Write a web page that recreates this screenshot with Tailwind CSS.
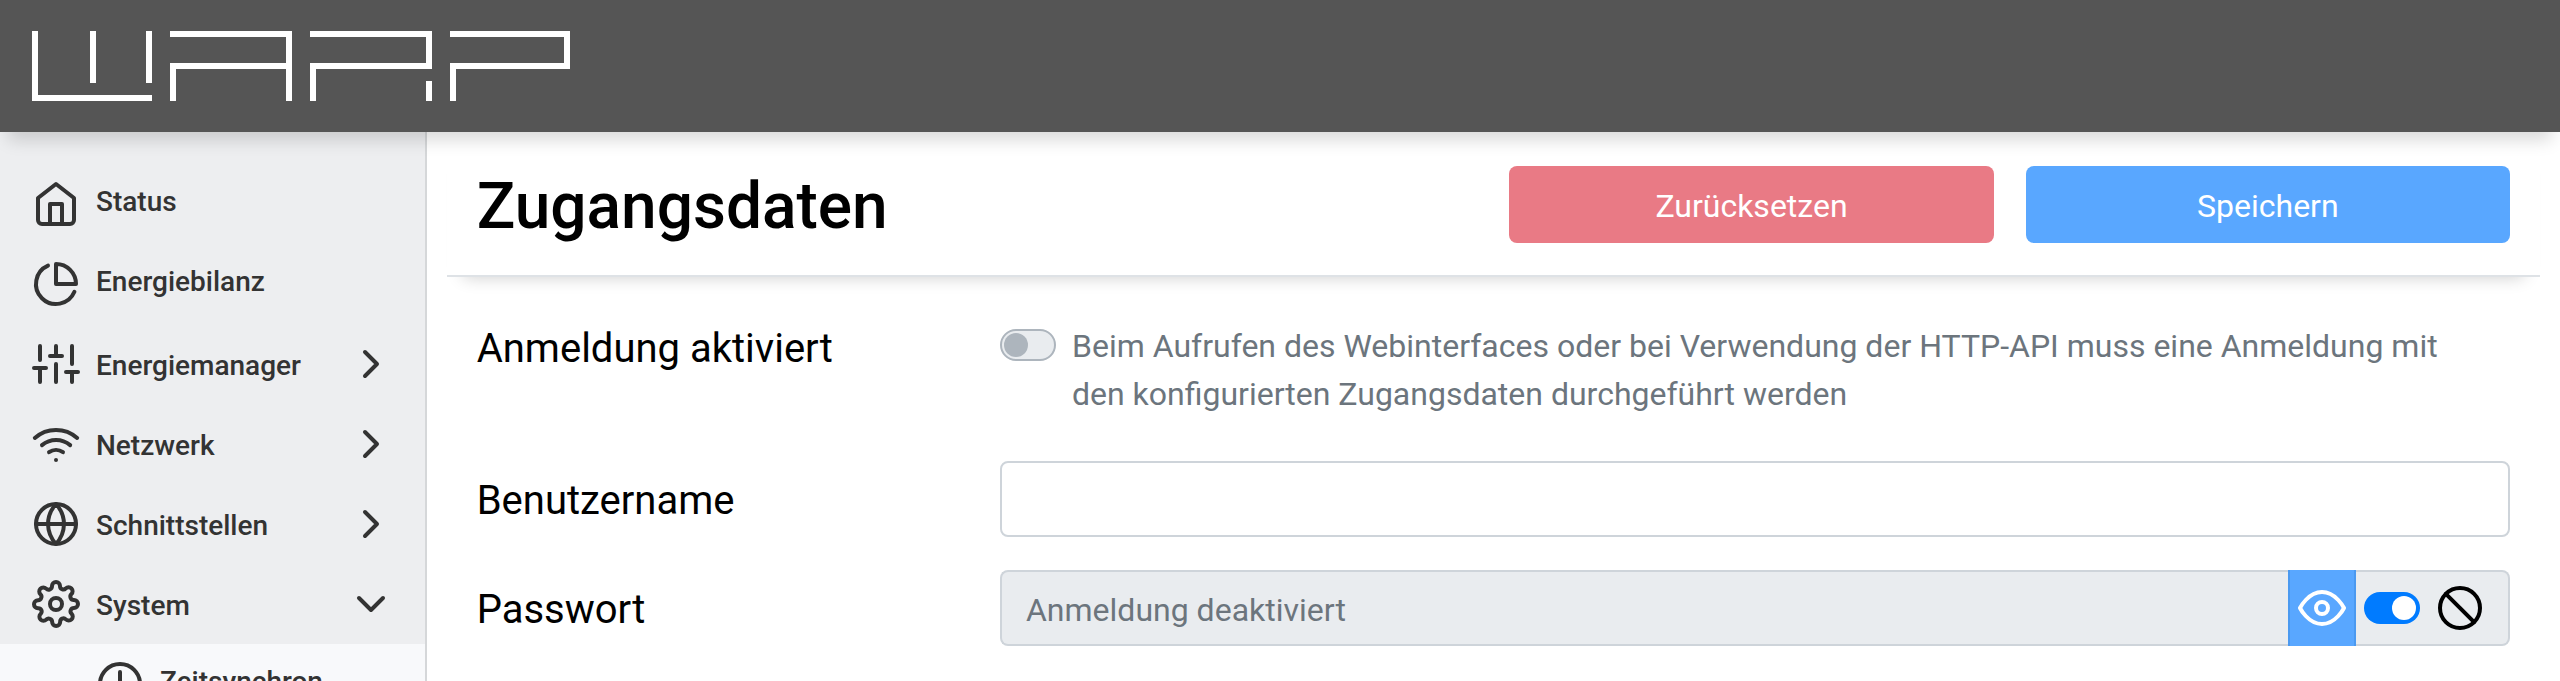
<!DOCTYPE html>
<html lang="de">
<head>
<meta charset="utf-8">
<meta name="viewport" content="width=device-width, initial-scale=1">
<title>WARP – Zugangsdaten</title>
<script src="https://cdn.jsdelivr.net/npm/@tailwindcss/browser@4"></script>
</head>
<body class="flex h-screen flex-col overflow-hidden bg-white font-['Roboto',sans-serif] text-black">

<header class="relative z-10 flex h-[132px] shrink-0 items-center bg-[#555555] px-8 shadow-[0_16px_16px_-8px_rgba(0,0,0,0.15)]">
  <a href="#" aria-label="WARP">
    <svg class="h-[70px] w-[538px]" viewBox="0 0 538 70" fill="none" stroke="#fff" stroke-width="6">
      <path d="M3 0V67H120M61 0V52M117 0V52"/>
      <path d="M138 3H257V70M141 70V35H257"/>
      <path d="M278 3H397V35H281V70M397 50V70"/>
      <path d="M418 3H535V35H421V70"/>
    </svg>
  </a>
</header>

<div class="flex min-h-0 flex-1">
  <nav class="w-1/6 shrink-0 overflow-hidden border-r-2 border-[#d5d7d9] bg-[#edeef0] pt-8 text-[28px] leading-10 font-medium text-[#333333]">
    <a href="#status" class="flex h-20 items-center gap-4 px-8">
      <svg class="size-12 shrink-0" viewBox="0 0 24 24" fill="none" stroke="currentColor" stroke-width="2" stroke-linecap="round" stroke-linejoin="round"><path d="M3 9l9-7 9 7v11a2 2 0 0 1-2 2H5a2 2 0 0 1-2-2z"/><path d="M9 22V12h6v10"/></svg>
      <span class="pb-1">Status</span>
    </a>
    <a href="#energiebilanz" class="flex h-20 items-center gap-4 px-8">
      <svg class="size-12 shrink-0" viewBox="0 0 24 24" fill="none" stroke="currentColor" stroke-width="2" stroke-linecap="round" stroke-linejoin="round"><path d="M21.21 15.89A10 10 0 1 1 8 2.83"/><path d="M22 12A10 10 0 0 0 12 2v10z"/></svg>
      <span class="pb-1">Energiebilanz</span>
    </a>
    <a href="#energiemanager" class="flex h-20 items-center gap-4 pr-[30px] pl-8">
      <svg class="size-12 shrink-0" viewBox="0 0 24 24" fill="none" stroke="currentColor" stroke-width="2" stroke-linecap="round" stroke-linejoin="round"><path d="M4 21v-7M4 10V3M12 21v-9M12 8V3M20 21v-5M20 12V3M1 14h6M9 8h6M17 16h6"/></svg>
      <span class="flex-1 pt-1">Energiemanager</span>
      <svg class="size-12 shrink-0" viewBox="0 0 24 24" fill="none" stroke="currentColor" stroke-width="2" stroke-linecap="round" stroke-linejoin="round"><path d="M9 18l6-6-6-6"/></svg>
    </a>
    <a href="#netzwerk" class="flex h-20 items-center gap-4 pr-[30px] pl-8">
      <svg class="size-12 shrink-0" viewBox="0 0 24 24" fill="none" stroke="currentColor" stroke-width="2" stroke-linecap="round" stroke-linejoin="round"><path d="M5 12.55a11 11 0 0 1 14.08 0"/><path d="M1.42 9a16 16 0 0 1 21.16 0"/><path d="M8.53 16.11a6 6 0 0 1 6.95 0"/><path d="M12 20h.01"/></svg>
      <span class="flex-1 pt-1">Netzwerk</span>
      <svg class="size-12 shrink-0" viewBox="0 0 24 24" fill="none" stroke="currentColor" stroke-width="2" stroke-linecap="round" stroke-linejoin="round"><path d="M9 18l6-6-6-6"/></svg>
    </a>
    <a href="#schnittstellen" class="flex h-20 items-center gap-4 pr-[30px] pl-8">
      <svg class="size-12 shrink-0" viewBox="0 0 24 24" fill="none" stroke="currentColor" stroke-width="2" stroke-linecap="round" stroke-linejoin="round"><circle cx="12" cy="12" r="10"/><path d="M2 12h20"/><path d="M12 2a15.3 15.3 0 0 1 4 10 15.3 15.3 0 0 1-4 10 15.3 15.3 0 0 1-4-10 15.3 15.3 0 0 1 4-10z"/></svg>
      <span class="flex-1 pt-1">Schnittstellen</span>
      <svg class="size-12 shrink-0" viewBox="0 0 24 24" fill="none" stroke="currentColor" stroke-width="2" stroke-linecap="round" stroke-linejoin="round"><path d="M9 18l6-6-6-6"/></svg>
    </a>
    <a href="#system" class="flex h-20 items-center gap-4 pr-[30px] pl-8">
      <svg class="size-12 shrink-0" viewBox="0 0 24 24" fill="none" stroke="currentColor" stroke-width="2" stroke-linecap="round" stroke-linejoin="round"><circle cx="12" cy="12" r="3"/><path d="M19.4 15a1.65 1.65 0 0 0 .33 1.82l.06.06a2 2 0 0 1 0 2.83 2 2 0 0 1-2.83 0l-.06-.06a1.65 1.65 0 0 0-1.82-.33 1.65 1.65 0 0 0-1 1.51V21a2 2 0 0 1-2 2 2 2 0 0 1-2-2v-.09A1.65 1.65 0 0 0 9 19.4a1.65 1.65 0 0 0-1.82.33l-.06.06a2 2 0 0 1-2.83 0 2 2 0 0 1 0-2.83l.06-.06a1.65 1.65 0 0 0 .33-1.82 1.65 1.65 0 0 0-1.51-1H3a2 2 0 0 1-2-2 2 2 0 0 1 2-2h.09A1.65 1.65 0 0 0 4.6 9a1.65 1.65 0 0 0-.33-1.82l-.06-.06a2 2 0 0 1 0-2.83 2 2 0 0 1 2.83 0l.06.06a1.65 1.65 0 0 0 1.82.33H9a1.65 1.65 0 0 0 1-1.51V3a2 2 0 0 1 2-2 2 2 0 0 1 2 2v.09a1.65 1.65 0 0 0 1 1.51 1.65 1.65 0 0 0 1.82-.33l.06-.06a2 2 0 0 1 2.83 0 2 2 0 0 1 0 2.83l-.06.06a1.65 1.65 0 0 0-.33 1.82V9a1.65 1.65 0 0 0 1.51 1H21a2 2 0 0 1 2 2 2 2 0 0 1-2 2h-.09a1.65 1.65 0 0 0-1.51 1z"/></svg>
      <span class="flex-1 pt-1">System</span>
      <svg class="size-12 shrink-0" viewBox="0 0 24 24" fill="none" stroke="currentColor" stroke-width="2" stroke-linecap="round" stroke-linejoin="round"><path d="M6 9l6 6 6-6"/></svg>
    </a>
    <a href="#zeitsynchron" class="flex h-20 items-center gap-4 bg-[#f8f9fb] pr-8 pl-24">
      <svg class="size-12 shrink-0" viewBox="0 0 24 24" fill="none" stroke="currentColor" stroke-width="2" stroke-linecap="round" stroke-linejoin="round"><circle cx="12" cy="12" r="10"/><path d="M12 6v6l4 2"/></svg>
      <span class="pb-1">Zeitsynchron</span>
    </a>
  </nav>

  <main class="min-w-0 flex-1 px-5">
    <div class="flex items-start gap-8 border-b-2 border-[#dee2e6] px-[30px] pt-[34px] pb-8 shadow-[0_16px_16px_-16px_rgba(0,0,0,0.2)]">
      <h1 class="flex-1 pt-[5px] text-[64px] leading-[72px] font-medium">Zugangsdaten</h1>
      <div class="grid flex-1 grid-cols-2 gap-8">
        <button type="button" class="h-[77px] rounded-lg bg-[#e97a85] pt-0.5 text-[32px] leading-[48px] text-white">Zurücksetzen</button>
        <button type="submit" form="login" class="h-[77px] rounded-lg bg-[#59a7ff] pt-0.5 text-[32px] leading-[48px] text-white">Speichern</button>
      </div>
    </div>

    <form id="login" class="flex flex-col gap-[33px] pt-8">
      <div class="flex items-start">
        <label for="enable" class="w-1/4 px-[30px] pt-2.5 text-[40px] leading-[60px]">Anmeldung aktiviert</label>
        <div class="flex w-3/4 gap-4 pt-[13px] pr-[60px] pb-2.5 pl-[30px]">
          <input id="enable" type="checkbox" disabled class="mt-[7px] h-8 w-14 shrink-0 appearance-none rounded-full border-2 border-[#adb5bd] bg-[#e9ecef] p-0.5 before:block before:size-6 before:rounded-full before:bg-[#adb5bd] before:content-['']">
          <label for="enable" class="text-[32px] leading-[48px] text-[#6c757d]">Beim Aufrufen des Webinterfaces oder bei Verwendung der HTTP-API muss eine Anmeldung mit den konfigurierten Zugangsdaten durchgeführt werden</label>
        </div>
      </div>

      <div class="flex items-start">
        <label for="username" class="w-1/4 px-[30px] pt-2.5 text-[40px] leading-[60px]">Benutzername</label>
        <div class="w-3/4 px-[30px]">
          <input id="username" type="text" class="block h-[76px] w-full rounded-lg border-2 border-[#ced4da] bg-white px-6 text-[32px] text-[#495057]">
        </div>
      </div>

      <div class="flex items-start">
        <label for="password" class="w-1/4 px-[30px] pt-2.5 text-[40px] leading-[60px]">Passwort</label>
        <div class="flex h-[76px] w-3/4 px-[30px]">
          <input id="password" type="password" disabled placeholder="Anmeldung deaktiviert" class="min-w-0 flex-1 rounded-l-lg border-2 border-r-0 border-[#ced4da] bg-[#e9ecef] px-6 pt-1 text-[32px] placeholder:text-[#6c757d] placeholder:opacity-100">
          <button type="button" aria-label="Passwort anzeigen" class="flex w-[68px] items-center justify-center border-x-2 border-[#4a99f0] bg-[#59a7ff] text-white">
            <svg class="size-12" viewBox="0 0 24 24" fill="none" stroke="currentColor" stroke-width="2" stroke-linecap="round" stroke-linejoin="round"><path d="M1 12s4-8 11-8 11 8 11 8-4 8-11 8-11-8-11-8z"/><circle cx="12" cy="12" r="3"/></svg>
          </button>
          <label for="clear" class="flex items-center gap-4 rounded-r-lg border-2 border-l-0 border-[#ced4da] bg-[#e9ecef] pr-6 pl-2">
            <input id="clear" type="checkbox" checked aria-label="Passwort löschen" class="h-8 w-14 appearance-none rounded-full bg-[#007bff] p-1 before:ml-auto before:block before:size-6 before:rounded-full before:bg-white before:content-['']">
            <svg class="size-12" viewBox="0 0 24 24" fill="none" stroke="currentColor" stroke-width="2" stroke-linecap="round" stroke-linejoin="round"><circle cx="12" cy="12" r="10"/><path d="M4.93 4.93l14.14 14.14"/></svg>
          </label>
        </div>
      </div>
    </form>
  </main>
</div>
</body>
</html>
